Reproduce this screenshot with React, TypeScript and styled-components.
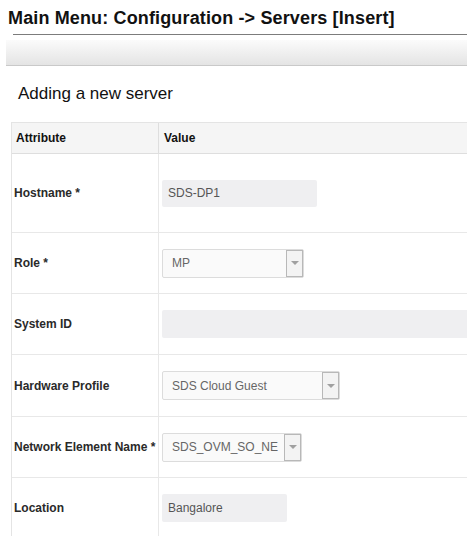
import React from "react";
import styled, { createGlobalStyle } from "styled-components";

const FONT = `"Liberation Sans", Arial, Helvetica, sans-serif`;

const Global = createGlobalStyle`
  html, body { margin: 0; padding: 0; background: #fff; overflow: hidden; }
  body { font-family: ${FONT}; }
`;

const Page = styled.div`
  width: 467px;
  overflow: hidden;
  font-family: ${FONT};
`;

const Title = styled.h1`
  margin: 8px 0 0 8px;
  font-size: 18px;
  line-height: 20px;
  font-weight: bold;
  letter-spacing: 0.14px;
  color: #111;
  white-space: nowrap;
`;

const Rule = styled.div`
  margin: 6px 0 0 13px;
  height: 1px;
  background: #7c7c7c;
`;

const Toolbar = styled.div`
  margin: 5px 0 0 6px;
  height: 25px;
  background: linear-gradient(#fbfbfb, #e4e4e4);
  border-bottom: 1px solid #c9c9c9;
`;

const Heading = styled.h2`
  margin: 18px 0 0 18px;
  font-size: 17px;
  line-height: 20px;
  font-weight: normal;
  color: #111;
`;

const Table = styled.div`
  margin: 18px 0 0 11px;
  width: 480px;
  border-top: 1px solid #e4e4e4;
  border-left: 1px solid #e4e4e4;
`;

const Row = styled.div<{ $h: number; $head?: boolean }>`
  display: grid;
  grid-template-columns: 147px 1fr;
  height: ${(p) => p.$h}px;
  box-sizing: border-box;
  border-bottom: 1px solid ${(p) => (p.$head ? "#dedede" : "#e8e8e8")};
  background: ${(p) => (p.$head ? "#f5f5f5" : "#fff")};
`;

const Label = styled.div<{ $head?: boolean }>`
  display: flex;
  align-items: center;
  padding-left: ${(p) => (p.$head ? 4 : 2)}px;
  border-right: 1px solid ${(p) => (p.$head ? "#dedede" : "#e8e8e8")};
  font-size: 12px;
  font-weight: bold;
  color: ${(p) => (p.$head ? "#111" : "#2a2a2a")};
  white-space: nowrap;
`;

const Value = styled.div<{ $head?: boolean }>`
  display: flex;
  align-items: center;
  padding-left: ${(p) => (p.$head ? 5 : 3)}px;
  font-size: 12px;
  font-weight: ${(p) => (p.$head ? "bold" : "normal")};
  color: ${(p) => (p.$head ? "#111" : "#2a2a2a")};
`;

const TextBox = styled.div<{ $w: number; $h: number }>`
  width: ${(p) => p.$w}px;
  height: ${(p) => p.$h}px;
  background: #efeff1;
  border-radius: 2px;
  display: flex;
  align-items: center;
  padding-left: 6px;
  box-sizing: border-box;
  font-size: 12px;
  color: #555;
  flex-shrink: 0;
`;

const Select = styled.div<{ $w: number }>`
  width: ${(p) => p.$w}px;
  height: 29px;
  box-sizing: border-box;
  background: #fafafa;
  border: 1px solid #dcdcdc;
  border-radius: 2px;
  display: flex;
  align-items: stretch;
  font-size: 12px;
  color: #666;
`;

const SelectText = styled.div`
  flex: 1;
  display: flex;
  align-items: center;
  padding-left: 9px;
  white-space: nowrap;
  overflow: hidden;
`;

const DropButton = styled.div`
  width: 17px;
  box-sizing: border-box;
  border: 1px solid #b8b8b8;
  background: #f3f3f3;
  display: flex;
  align-items: center;
  justify-content: center;
`;

const Arrow = styled.div`
  width: 0;
  height: 0;
  border-left: 4px solid transparent;
  border-right: 4px solid transparent;
  border-top: 4px solid #a0a0a0;
`;

const Dropdown = ({ w, text }: { w: number; text: string }) => (
  <Select $w={w}>
    <SelectText>{text}</SelectText>
    <DropButton>
      <Arrow />
    </DropButton>
  </Select>
);

export default function App() {
  return (
    <Page>
      <Global />
      <Title>Main Menu: Configuration -&gt; Servers [Insert]</Title>
      <Rule />
      <Toolbar />
      <Heading>Adding a new server</Heading>
      <Table>
        <Row $h={31} $head>
          <Label $head>Attribute</Label>
          <Value $head>Value</Value>
        </Row>
        <Row $h={79}>
          <Label>Hostname *</Label>
          <Value>
            <TextBox $w={155} $h={27}>SDS-DP1</TextBox>
          </Value>
        </Row>
        <Row $h={61}>
          <Label>Role *</Label>
          <Value>
            <Dropdown w={142} text="MP" />
          </Value>
        </Row>
        <Row $h={61}>
          <Label>System ID</Label>
          <Value>
            <TextBox $w={320} $h={28} />
          </Value>
        </Row>
        <Row $h={62}>
          <Label>Hardware Profile</Label>
          <Value>
            <Dropdown w={178} text="SDS Cloud Guest" />
          </Value>
        </Row>
        <Row $h={61}>
          <Label>Network Element Name *</Label>
          <Value>
            <Dropdown w={140} text="SDS_OVM_SO_NE" />
          </Value>
        </Row>
        <Row $h={61}>
          <Label>Location</Label>
          <Value>
            <TextBox $w={125} $h={28}>Bangalore</TextBox>
          </Value>
        </Row>
      </Table>
    </Page>
  );
}
